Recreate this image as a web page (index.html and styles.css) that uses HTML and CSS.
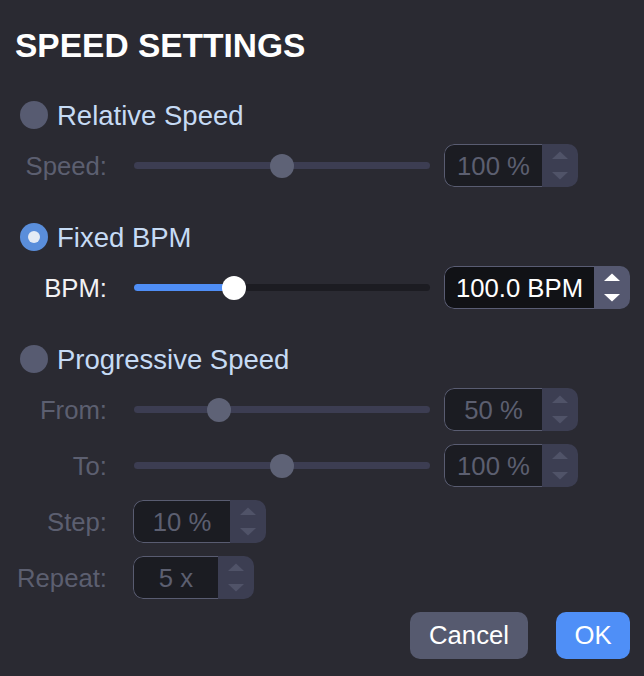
FILE: index.html
```html
<!DOCTYPE html>
<html>
<head>
<meta charset="utf-8">
<link rel="stylesheet" href="styles.css">
</head>
<body>
<div class="dialog">
  <h1 class="title">SPEED SETTINGS</h1>

  <div class="section">
    <div class="radio-row">
      <span class="radio"></span>
      <span class="radio-label">Relative Speed</span>
    </div>
    <div class="rows">
      <div class="row">
        <span class="label disabled">Speed:</span>
        <div class="slider">
          <div class="track"></div>
          <div class="thumb" style="left:136px"></div>
        </div>
        <div class="spin disabled w-speed">
          <div class="field">100 %</div>
          <div class="btns"><svg width="36" height="43" viewBox="0 0 36 43"><polygon points="10,15 26,15 18,7.5"/><polygon points="10,28 26,28 18,35.5"/></svg></div>
        </div>
      </div>
    </div>
  </div>

  <div class="section">
    <div class="radio-row">
      <span class="radio checked"></span>
      <span class="radio-label">Fixed BPM</span>
    </div>
    <div class="rows">
      <div class="row">
        <span class="label active">BPM:</span>
        <div class="slider">
          <div class="track dark"></div>
          <div class="fill" style="width:100px"></div>
          <div class="thumb white" style="left:88px"></div>
        </div>
        <div class="spin active w-bpm">
          <div class="field">100.0 BPM</div>
          <div class="btns"><svg width="36" height="43" viewBox="0 0 36 43"><polygon points="10,15 26,15 18,7.5"/><polygon points="10,28 26,28 18,35.5"/></svg></div>
        </div>
      </div>
    </div>
  </div>

  <div class="section last">
    <div class="radio-row">
      <span class="radio"></span>
      <span class="radio-label">Progressive Speed</span>
    </div>
    <div class="rows">
      <div class="row">
        <span class="label disabled">From:</span>
        <div class="slider">
          <div class="track"></div>
          <div class="thumb" style="left:73px"></div>
        </div>
        <div class="spin disabled w-speed">
          <div class="field">50 %</div>
          <div class="btns"><svg width="36" height="43" viewBox="0 0 36 43"><polygon points="10,15 26,15 18,7.5"/><polygon points="10,28 26,28 18,35.5"/></svg></div>
        </div>
      </div>
      <div class="row">
        <span class="label disabled">To:</span>
        <div class="slider">
          <div class="track"></div>
          <div class="thumb" style="left:136px"></div>
        </div>
        <div class="spin disabled w-speed">
          <div class="field">100 %</div>
          <div class="btns"><svg width="36" height="43" viewBox="0 0 36 43"><polygon points="10,15 26,15 18,7.5"/><polygon points="10,28 26,28 18,35.5"/></svg></div>
        </div>
      </div>
      <div class="row">
        <span class="label disabled">Step:</span>
        <div class="spin disabled w-step short">
          <div class="field">10 %</div>
          <div class="btns"><svg width="36" height="43" viewBox="0 0 36 43"><polygon points="10,15 26,15 18,7.5"/><polygon points="10,28 26,28 18,35.5"/></svg></div>
        </div>
      </div>
      <div class="row">
        <span class="label disabled">Repeat:</span>
        <div class="spin disabled w-repeat short">
          <div class="field">5 x</div>
          <div class="btns"><svg width="36" height="43" viewBox="0 0 36 43"><polygon points="10,15 26,15 18,7.5"/><polygon points="10,28 26,28 18,35.5"/></svg></div>
        </div>
      </div>
    </div>
  </div>

  <div class="actions">
    <button class="btn cancel">Cancel</button>
    <button class="btn ok">OK</button>
  </div>
</div>
</body>
</html>
```

FILE: styles.css
```css
html, body {
  margin: 0;
  padding: 0;
  background: #2a2a32;
}

body {
  font-family: "Liberation Sans", Arial, sans-serif;
  width: 644px;
  height: 676px;
  overflow: hidden;
}

.dialog {
  padding-top: 26px;
  display: flex;
  flex-direction: column;
}

.title {
  margin: 0 0 27px 0;
  padding-left: 15px;
  font-size: 33.5px;
  line-height: 40px;
  font-weight: bold;
  color: #ffffff;
}

.section {
  display: flex;
  flex-direction: column;
  gap: 8px;
  margin-bottom: 28px;
}

.section.last {
  margin-bottom: 13px;
}

.radio-row {
  height: 43px;
  display: flex;
  align-items: center;
  padding-left: 20px;
  gap: 9px;
}

.radio {
  width: 28px;
  height: 28px;
  border-radius: 50%;
  background: #575b71;
  display: flex;
  align-items: center;
  justify-content: center;
  flex: none;
}

.radio.checked {
  background: #5a8edb;
}

.radio.checked::after {
  content: "";
  width: 12px;
  height: 12px;
  border-radius: 50%;
  background: #e4ebf5;
}

.radio-label {
  font-size: 27.5px;
  color: #c6dbf5;
  position: relative;
  top: 1px;
}

.rows {
  display: flex;
  flex-direction: column;
  gap: 13px;
}

.row {
  height: 43px;
  display: flex;
  align-items: center;
}

.label {
  width: 107px;
  text-align: right;
  font-size: 25.7px;
  flex: none;
  position: relative;
  top: 1px;
}

.label.disabled {
  color: #5c5f70;
}

.label.active {
  color: #f2f2f4;
}

.slider {
  position: relative;
  width: 296px;
  height: 24px;
  margin-left: 27px;
  margin-right: 14px;
  display: flex;
  align-items: center;
  flex: none;
}

.track {
  width: 100%;
  height: 7px;
  border-radius: 4px;
  background: #3c3d52;
}

.track.dark {
  background: #1c1c22;
}

.fill {
  position: absolute;
  left: 0;
  top: 8.5px;
  height: 7px;
  border-radius: 4px;
  background: #4f8ef6;
}

.thumb {
  position: absolute;
  top: 0;
  width: 24px;
  height: 24px;
  border-radius: 50%;
  background: #5e6276;
}

.thumb.white {
  background: #ffffff;
}

.spin {
  height: 43px;
  display: flex;
  border-radius: 10px;
  overflow: hidden;
  flex: none;
}

.spin.short {
  margin-left: 26px;
}

.w-speed { width: 134px; }
.w-bpm { width: 186px; }
.w-step { width: 133px; }
.w-repeat { width: 121px; }

.field {
  flex: 1;
  display: flex;
  align-items: center;
  justify-content: center;
  font-size: 25.7px;
  background: #1b1c22;
  border: 1.5px solid #595c71;
  border-right: none;
  border-radius: 10px 0 0 10px;
  padding-top: 2px;
}

.spin.disabled .field {
  color: #5c5f70;
}

.spin.active .field {
  color: #ffffff;
  background: #111216;
  border-color: #5a5d74;
}

.btns {
  width: 36px;
  flex: none;
  background: #3c3e52;
}

.btns svg {
  display: block;
}

.spin.disabled .btns polygon {
  fill: #505368;
}

.spin.active .btns {
  background: #555870;
}

.spin.active .btns polygon {
  fill: #ffffff;
}

.actions {
  display: flex;
  justify-content: flex-end;
  gap: 28px;
  padding-right: 14px;
}

.btn {
  height: 47px;
  border: none;
  border-radius: 10px;
  font-family: "Liberation Sans", Arial, sans-serif;
  font-size: 25.7px;
  color: #ffffff;
  padding: 0;
}

.btn.cancel {
  width: 118px;
  background: #565a6f;
}

.btn.ok {
  width: 74px;
  background: #4f8ff7;
}
```
